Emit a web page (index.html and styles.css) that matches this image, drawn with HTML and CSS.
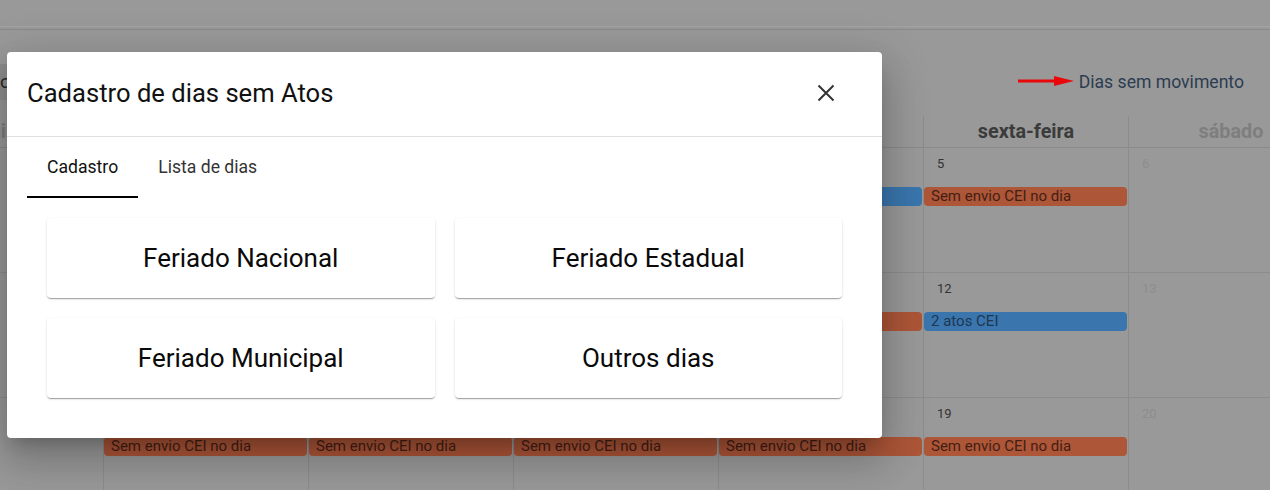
FILE: index.html
```html
<!DOCTYPE html>
<html lang="pt-BR">
<head>
<meta charset="utf-8">
<title>Cadastro de dias sem Atos</title>
<link rel="stylesheet" href="styles.css">
</head>
<body>
<div class="page">
  <div class="topbar"></div>
  <div class="topbar-shadow"></div>

  <div class="toolbar">
    <div class="tool-btn">c</div>
    <div class="link-wrap">
      <svg class="arrow" width="56" height="12" viewBox="0 0 56 12">
        <line x1="0" y1="6" x2="40" y2="6" stroke="#e8080a" stroke-width="3"/>
        <polygon points="36,1 56,6 36,11" fill="#e8080a"/>
      </svg>
      <span class="link">Dias sem movimento</span>
    </div>
  </div>

  <div class="cal-wrap">
    <div class="cal">
      <div class="hcell weekend">domingo</div>
      <div class="hcell">segunda-feira</div>
      <div class="hcell">terça-feira</div>
      <div class="hcell">quarta-feira</div>
      <div class="hcell">quinta-feira</div>
      <div class="hcell">sexta-feira</div>
      <div class="hcell weekend">sábado</div>

      <div class="cell"><div class="num off">31</div></div>
      <div class="cell"><div class="num">1</div><div class="ev blue">1 ato CEI</div></div>
      <div class="cell"><div class="num">2</div><div class="ev blue">1 ato CEI</div></div>
      <div class="cell"><div class="num">3</div><div class="ev blue">1 ato CEI</div></div>
      <div class="cell"><div class="num">4</div><div class="ev blue">1 ato CEI</div></div>
      <div class="cell"><div class="num">5</div><div class="ev orange">Sem envio CEI no dia</div></div>
      <div class="cell"><div class="num off">6</div></div>

      <div class="cell"><div class="num off">7</div></div>
      <div class="cell"><div class="num">8</div><div class="ev orange">Sem envio CEI no dia</div></div>
      <div class="cell"><div class="num">9</div><div class="ev orange">Sem envio CEI no dia</div></div>
      <div class="cell"><div class="num">10</div><div class="ev orange">Sem envio CEI no dia</div></div>
      <div class="cell"><div class="num">11</div><div class="ev orange">Sem envio CEI no dia</div></div>
      <div class="cell"><div class="num">12</div><div class="ev blue">2 atos CEI</div></div>
      <div class="cell"><div class="num off">13</div></div>

      <div class="cell"><div class="num off">14</div></div>
      <div class="cell"><div class="num">15</div><div class="ev orange">Sem envio CEI no dia</div></div>
      <div class="cell"><div class="num">16</div><div class="ev orange">Sem envio CEI no dia</div></div>
      <div class="cell"><div class="num">17</div><div class="ev orange">Sem envio CEI no dia</div></div>
      <div class="cell"><div class="num">18</div><div class="ev orange">Sem envio CEI no dia</div></div>
      <div class="cell"><div class="num">19</div><div class="ev orange">Sem envio CEI no dia</div></div>
      <div class="cell"><div class="num off">20</div></div>
    </div>
  </div>
</div>

<div class="dialog">
  <div class="dialog-header">
    <h2 class="dialog-title">Cadastro de dias sem Atos</h2>
    <button class="close-btn" aria-label="Fechar">
      <svg width="18" height="18" viewBox="0 0 18 18">
        <path d="M1.5 1.5 L16.5 16.5 M16.5 1.5 L1.5 16.5" stroke="#333" stroke-width="2" fill="none"/>
      </svg>
    </button>
  </div>
  <div class="tabs">
    <div class="tab active">Cadastro</div>
    <div class="tab">Lista de dias</div>
  </div>
  <div class="options">
    <div class="option">Feriado Nacional</div>
    <div class="option">Feriado Estadual</div>
    <div class="option">Feriado Municipal</div>
    <div class="option">Outros dias</div>
  </div>
</div>
</body>
</html>
```

FILE: styles.css
```css
* { box-sizing: border-box; }

html, body {
  margin: 0;
  padding: 0;
}

body {
  width: 1270px;
  height: 490px;
  overflow: hidden;
  background: #999999;
  font-family: Roboto, "Liberation Sans", Arial, sans-serif;
  position: relative;
}

.page {
  width: 1270px;
  height: 490px;
  overflow: hidden;
}

.topbar {
  height: 27px;
  border-bottom: 1px solid #a3a3a3;
}

.topbar-shadow {
  height: 1px;
  margin-top: 2px;
  background: #8a8a8a;
}

.toolbar {
  display: flex;
  align-items: center;
  height: 36px;
  margin-top: 34px;
  margin-bottom: 16px;
}

.tool-btn {
  height: 36px;
  width: 120px;
  background: #8e8e8e;
  color: #2a2a2a;
  font-size: 19px;
  line-height: 36px;
  border-radius: 0 3px 3px 0;
}

.link-wrap {
  margin-left: auto;
  margin-right: 26px;
  display: flex;
  align-items: center;
  gap: 5px;
}

.arrow {
  display: block;
  margin-top: -2px;
}

.link {
  font-size: 17.6px;
  color: #2b3d50;
  line-height: 22px;
}

.cal-wrap {
  overflow: hidden;
}

.cal {
  display: grid;
  grid-template-columns: repeat(7, 205px);
  grid-template-rows: 32px 125px 125px 125px;
  margin-left: -102px;
  width: 1435px;
}

.hcell {
  border-left: 1px solid #8c8c8c;
  border-bottom: 1px solid #8a8a8a;
  font-weight: 700;
  font-size: 19.8px;
  color: #3b3b3b;
  text-align: center;
  line-height: 31px;
  white-space: nowrap;
}

.hcell:first-child,
.cell:nth-child(7n+1) {
  border-left: none;
}

.hcell.weekend {
  color: #7e7e7e;
}

.cell {
  border-left: 1px solid #8c8c8c;
  border-bottom: 1px solid #8c8c8c;
}

.num {
  font-size: 13px;
  line-height: 15px;
  color: #333;
  padding: 8px 0 0 13px;
  height: 39px;
}

.num.off {
  color: #8d8d8d;
}

.ev {
  height: 19px;
  margin-right: 1px;
  border-radius: 4px;
  font-size: 15px;
  line-height: 19px;
  padding-left: 7px;
  white-space: nowrap;
  overflow: hidden;
}

.ev.orange {
  background: #ad5638;
  color: #451e14;
}

.ev.blue {
  background: #3a76ad;
  color: #1d3652;
}

/* Dialog */
.dialog {
  position: absolute;
  left: 7px;
  top: 52px;
  width: 875px;
  background: #fff;
  border-radius: 4px;
  box-shadow: 0 11px 15px -7px rgba(0,0,0,.2), 0 24px 38px 3px rgba(0,0,0,.14), 0 9px 46px 8px rgba(0,0,0,.12);
}

.dialog-header {
  display: flex;
  align-items: center;
  height: 85px;
  padding: 0 36px 3px 20px;
  border-bottom: 1px solid #e0e0e0;
}

.dialog-title {
  margin: 0;
  font-size: 25.6px;
  font-weight: 400;
  color: #111;
  flex: 1;
  line-height: 30px;
}

.close-btn {
  width: 40px;
  height: 40px;
  border: none;
  background: transparent;
  padding: 0;
  display: flex;
  align-items: center;
  justify-content: center;
  cursor: pointer;
}

.tabs {
  display: flex;
  height: 61px;
  padding-left: 20px;
}

.tab {
  display: flex;
  align-items: center;
  padding: 0 20px;
  font-size: 17.6px;
  color: #333;
  border-bottom: 2px solid transparent;
}

.tab.active {
  color: #111;
  border-bottom-color: #000;
}

.options {
  display: grid;
  grid-template-columns: 1fr 1fr;
  gap: 20px;
  padding: 20px 40px 40px;
}

.option {
  height: 80px;
  display: flex;
  align-items: center;
  justify-content: center;
  background: #fff;
  border-radius: 4px;
  font-size: 26px;
  font-weight: 400;
  color: #0a0a0a;
  box-shadow: 0 2px 1px -1px rgba(0,0,0,.2), 0 1px 1px 0 rgba(0,0,0,.14), 0 1px 3px 0 rgba(0,0,0,.12);
}
```
